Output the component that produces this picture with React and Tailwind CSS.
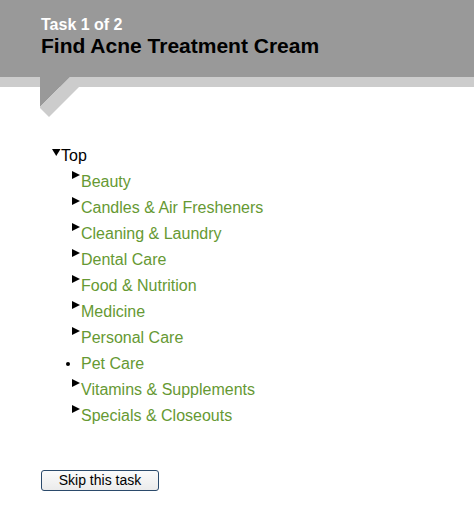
import React from 'react';

const categories = [
  'Beauty',
  'Candles & Air Fresheners',
  'Cleaning & Laundry',
  'Dental Care',
  'Food & Nutrition',
  'Medicine',
  'Personal Care',
  'Pet Care',
  'Vitamins & Supplements',
  'Specials & Closeouts',
];

function RightArrow() {
  return (
    <svg width="9" height="8" viewBox="0 0 9 8" className="mt-[2px] shrink-0">
      <polygon points="0,0 8,4 0,8" fill="#000" />
    </svg>
  );
}

function DownArrow() {
  return (
    <svg width="9" height="7" viewBox="0 0 9 7" className="mt-[6px] shrink-0">
      <polygon points="0,0 8.5,0 4.25,7" fill="#000" />
    </svg>
  );
}

export default function App() {
  return (
    <div className="w-[474px] h-[506px] bg-white font-['Liberation_Sans',Arial,sans-serif] overflow-hidden">
      {/* Header */}
      <div className="h-[77px] bg-[#999999] pl-[41px] pt-[16px]">
        <div className="text-[16px] leading-[18px] font-bold text-white">Task 1 of 2</div>
        <div className="text-[21px] leading-[24px] font-bold text-black">Find Acne Treatment Cream</div>
      </div>
      <div className="relative h-[10px] bg-[#cccccc]">
        <svg width="100" height="42" viewBox="0 0 100 42" className="absolute left-0 top-0">
          <polygon points="40,0 70,0 40,30" fill="#999999" />
          <polygon points="40,30 70,0 89,0 49,40 40,31" fill="#cccccc" />
        </svg>
      </div>

      {/* Category tree */}
      <div className="mt-[56px] text-[16px] leading-[26px]">
        <div className="flex items-start pl-[52px]">
          <DownArrow />
          <span className="text-black">Top</span>
        </div>
        {categories.map((c) =>
          c === 'Pet Care' ? (
            <div key={c} className="flex items-center pl-[66px]">
              <span className="w-[4px] h-[4px] rounded-full bg-black mr-[11px]" />
              <span className="text-[#669933]">{c}</span>
            </div>
          ) : (
            <div key={c} className="flex items-start pl-[72px]">
              <RightArrow />
              <a href="#" className="text-[#669933]">{c}</a>
            </div>
          )
        )}
      </div>

      <div className="mt-[39px] pl-[41px]">
        <button className="w-[118px] h-[21px] rounded-[3px] border border-[#2b4a6b] bg-gradient-to-b from-[#fbfbfb] to-[#ebebeb] text-[14px] leading-[18px] text-black">
          Skip this task
        </button>
      </div>
    </div>
  );
}
